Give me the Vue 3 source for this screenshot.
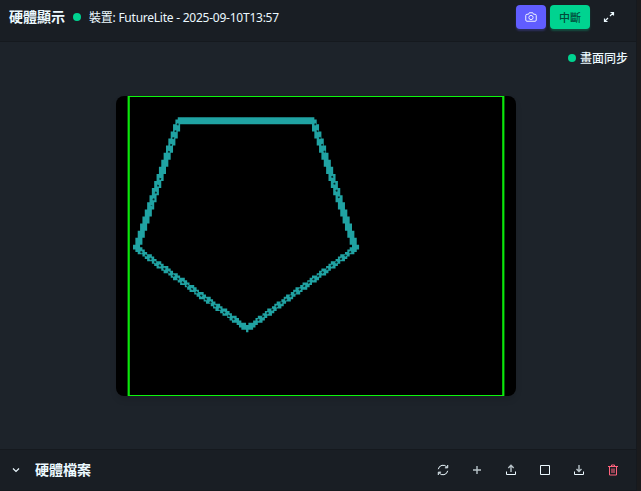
<script setup>
const vertices = [[21, 10], [78, 10], [96, 64], [50, 98], [3, 64]]

// plus-shaped pen
const pen = [[0, 0], [1, 0], [-1, 0], [0, 1], [0, -1]]

// Bresenham trace, each step stamping the pen
function trace(points) {
  const cells = new Map()
  const stamp = (x, y) => {
    for (const [dx, dy] of pen) cells.set(`${x + dx},${y + dy}`, [x + dx, y + dy])
  }
  points.forEach(([x0, y0], i) => {
    const [x1, y1] = points[(i + 1) % points.length]
    const dx = Math.abs(x1 - x0)
    const dy = -Math.abs(y1 - y0)
    const sx = x0 < x1 ? 1 : -1
    const sy = y0 < y1 ? 1 : -1
    let err = dx + dy
    let x = x0
    let y = y0
    while (true) {
      stamp(x, y)
      if (x === x1 && y === y1) break
      const e2 = 2 * err
      if (e2 >= dy) { err += dy; x += sx }
      if (e2 <= dx) { err += dx; y += sy }
    }
  })
  return [...cells.values()].map(([x, y]) => `M${x} ${y}h1v1h-1z`).join('')
}

const outline = trace(vertices)
</script>

<template>
  <div class="window">
    <section class="panel">
      <header class="header">
        <h2 class="title">硬體顯示</h2>
        <i class="dot"></i>
        <span class="device">裝置: FutureLite - 2025-09-10T13:57</span>
        <button class="btn camera">
          <svg width="12" height="12" viewBox="0 0 24 24" fill="none" stroke="currentColor" stroke-width="2" stroke-linejoin="round">
            <path d="M7 6.5l1.5-3h7l1.500 3h3a2.500 2.500 0 0 1 2.500 2.500v9a2.500 2.500 0 0 1-2.500 2.500H4A2.500 2.500 0 0 1 1.500 18V9A2.500 2.500 0 0 1 4 6.500z" />
            <circle cx="12" cy="13" r="4.200" />
          </svg>
        </button>
        <button class="btn disconnect">中斷</button>
        <button class="btn expand">
          <svg width="12" height="12" viewBox="0 0 12 12" fill="none" stroke="currentColor" stroke-width="1.2">
            <path d="M7 5l3.500-3.500M7.500 1.500h3v3M5 7l-3.500 3.500M1.500 7.500v3h3" />
          </svg>
        </button>
      </header>

      <main class="body">
        <div class="sync"><i class="dot"></i><span>畫面同步</span></div>
        <div class="screen">
          <svg class="canvas" width="376" height="300" viewBox="0 0 376 300">
            <g class="drawing">
              <path class="shape" transform="translate(.3 0) scale(2.355 2.362)" :d="outline" />
              <path class="holes steep" d="M50 27.500L39.500 60M32.500 82L23.500 110M187 27.500L197 57M204 80L211 102" />
              <path class="holes slanted" d="M12.500 155.500L108 225M223 155.500L129 225" />
            </g>
            <path class="frame-side" d="M.7 0V300M375.300 0V300" />
            <path class="frame-edge" d="M0 .5H376M0 299.500H376" />
          </svg>
        </div>
      </main>

      <footer class="footer">
        <svg class="chevron" width="8" height="6" viewBox="0 0 8 6" fill="none" stroke="currentColor" stroke-width="1.2"><path d="M1 1.5l3 3 3-3" /></svg>
        <h2 class="title">硬體檔案</h2>
        <div class="tools">
          <svg class="tool" viewBox="0 0 12 12"><path d="M1.300 5.200A4.800 4.800 0 0 1 10 3.300M10.700 1v2.800H7.900M10.700 6.800A4.800 4.800 0 0 1 2 8.700M1.300 11V8.200h2.800" /></svg>
          <svg class="tool" viewBox="0 0 12 12"><path class="soft" d="M6 2v8M2 6h8" /></svg>
          <svg class="tool" viewBox="0 0 12 12"><path d="M1.500 7.500v3h9v-3" /><path class="soft" d="M6 8V1.500M3.300 4L6 1.300 8.700 4" /></svg>
          <svg class="tool" viewBox="0 0 12 12"><path d="M1.500 1.500h9v9h-9z" /></svg>
          <svg class="tool" viewBox="0 0 12 12"><path d="M1.500 7.500v3h9v-3" /><path class="soft" d="M6 1v6.500M3.500 5L6 7.500 8.500 5" /></svg>
          <svg class="tool danger" viewBox="0 0 12 12"><path d="M1 2.500h10M4.500 2.500V1h3v1.500M2.500 2.500v8.500h7V2.500" /><path class="soft" d="M5 4.500v4.500M7 4.500v4.500" /></svg>
        </div>
      </footer>
    </section>
  </div>
</template>

<style>
body { margin: 0; background: #1b1b1d; }
</style>

<style scoped>
.window {
  box-sizing: border-box;
  width: 641px;
  height: 491px;
  padding-right: 4px;
  background: #1b1b1d;
  color: #ecf9ff;
  font-family: "Noto Sans", "Noto Sans CJK TC", sans-serif;
  overflow: hidden;
}
.panel {
  box-sizing: border-box;
  height: 491px;
  display: flex;
  flex-direction: column;
  border-right: 1px solid #15191e;
  border-bottom: 1px solid #15191e;
  background: #1d232a;
}
.header {
  box-sizing: border-box;
  flex: none;
  height: 42px;
  display: flex;
  align-items: center;
  padding: 0 15px 8px 9px;
  background: #191e24;
  border-bottom: 1px solid #15191e;
}
.title { margin: 0; font-size: 14px; line-height: 20px; font-weight: 700; white-space: nowrap; }
.dot { width: 8px; height: 8px; border-radius: 50%; background: #00d390; flex: none; }
.header .dot { margin: 0 8px; }
.device { font-size: 12px; line-height: 16px; white-space: nowrap; letter-spacing: -.24px; padding-top: 2px; }
.btn {
  box-sizing: border-box;
  display: flex;
  align-items: center;
  justify-content: center;
  height: 24px;
  padding: 0;
  border: 0;
  border-radius: 4px;
  font: 500 11px "Noto Sans CJK TC", sans-serif;
}
.camera { width: 30px; margin-left: auto; background: #605dff; color: #edf1fe; box-shadow: 0 2px 2px #605dff44; }
.disconnect { width: 40px; margin-left: 4px; background: #00d390; color: #004c39; box-shadow: 0 2px 2px #00d39044; }
.expand { width: 24px; margin-left: 7px; background: none; color: #ecf9ff; }
.body { flex: 1; display: flex; flex-direction: column; align-items: center; }
.sync {
  align-self: flex-end;
  display: flex;
  align-items: center;
  gap: 4px;
  height: 16px;
  margin: 8px 8px 30px 0;
  font-size: 12px;
  font-weight: 500;
  line-height: 16px;
}
.sync span { padding-top: 1px; }
.screen {
  width: 400px;
  height: 300px;
  display: flex;
  justify-content: center;
  margin-right: 4px;
  background: #000;
  border-radius: 8px;
  box-shadow: 0 4px 6px #0000001a;
}
.canvas { display: block; overflow: visible; }
.shape { fill: #20a3a3; }
.holes { fill: none; stroke: #001c1c; stroke-width: 1.8; opacity: .9; }
.steep { stroke-dasharray: 1.8 5.4; }
.slanted { stroke-dasharray: 2.1 3.6; }
.drawing { filter: blur(.35px); }
.frame-side { stroke: #0be60b; stroke-width: 2.2; }
.frame-edge { stroke: #0df50d; stroke-width: 1; }
.footer {
  box-sizing: border-box;
  flex: none;
  height: 41px;
  display: flex;
  align-items: center;
  padding: 0 17px 0 12px;
  background: #191e24;
  border-top: 1px solid #15191e;
}
.chevron { margin-right: 15px; }
.tools { display: flex; gap: 22px; margin-left: auto; }
.tool { width: 12px; height: 12px; fill: none; stroke: #ecf9ff; stroke-width: 1; }
.soft { stroke-width: 1.4; opacity: .75; }
.danger { stroke: #ff637d; }
</style>
